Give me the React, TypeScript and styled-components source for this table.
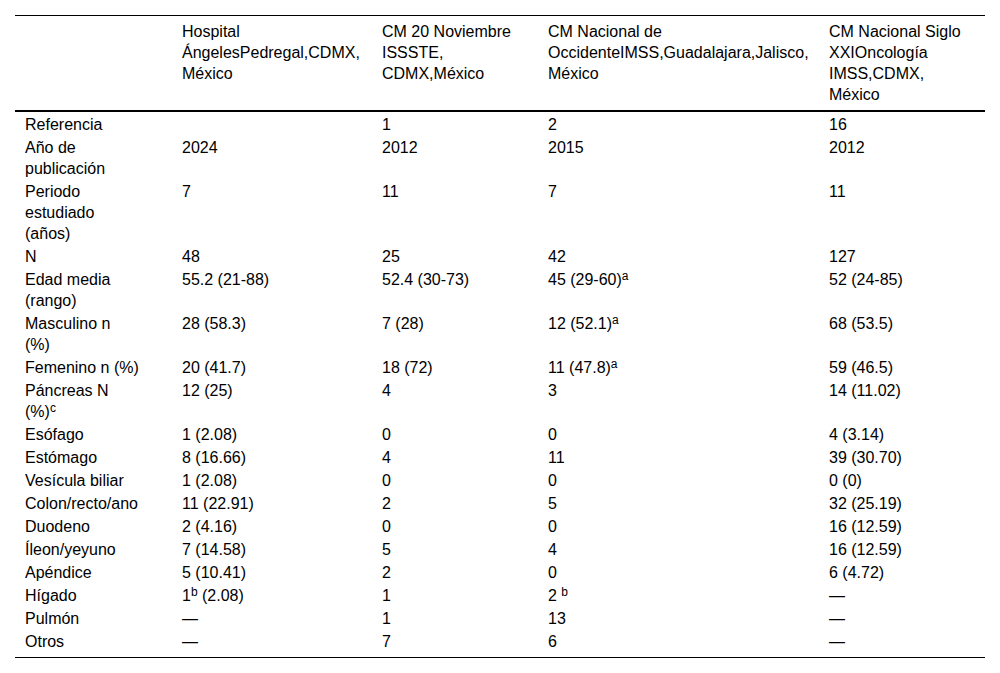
import React from "react";
import styled, { createGlobalStyle } from "styled-components";

const Global = createGlobalStyle`
  html, body { margin: 0; padding: 0; background: #fff; }
  body { font-family: "Liberation Sans", Arial, sans-serif; color: #000; }
`;

const Page = styled.div`
  padding: 15px;
`;

const Table = styled.table`
  width: 970px;
  border-collapse: collapse;
  table-layout: fixed;
  font-size: 16px;
  line-height: 21px;
  border-top: 1px solid #000;
  border-bottom: 1px solid #000;
`;

const Col = styled.col<{ $w: number }>`
  width: ${(p) => p.$w}px;
`;

const HeadCell = styled.th`
  text-align: left;
  vertical-align: top;
  font-weight: normal;
  padding: 5px 4px 5px 10px;
  white-space: nowrap;
  border-bottom: 2px solid #000;
`;

const Cell = styled.td<{ $last?: boolean }>`
  vertical-align: top;
  padding: 2px 4px ${(p) => (p.$last ? 5 : 0)}px 10px;
  white-space: nowrap;
`;

const Sup = styled.sup`
  font-size: 0.75em;
  line-height: 0;
  vertical-align: baseline;
  position: relative;
  top: -0.45em;
`;

type Content = React.ReactNode;

const lines = (parts: Content[]) =>
  parts.map((p, i) => (
    <React.Fragment key={i}>
      {i > 0 && <br />}
      {p}
    </React.Fragment>
  ));

const headers: Content[][] = [
  [""],
  ["Hospital", "ÁngelesPedregal,CDMX,", "México"],
  ["CM 20 Noviembre", "ISSSTE,", "CDMX,México"],
  ["CM Nacional de", "OccidenteIMSS,Guadalajara,Jalisco,", "México"],
  ["CM Nacional Siglo", "XXIOncología", "IMSS,CDMX,", "México"],
];

const rows: Content[][][] = [
  [["Referencia"], [""], ["1"], ["2"], ["16"]],
  [["Año de", "publicación"], ["2024"], ["2012"], ["2015"], ["2012"]],
  [["Periodo", "estudiado", "(años)"], ["7"], ["11"], ["7"], ["11"]],
  [["N"], ["48"], ["25"], ["42"], ["127"]],
  [
    ["Edad media", "(rango)"],
    ["55.2 (21-88)"],
    ["52.4 (30-73)"],
    [<>45 (29-60)<Sup>a</Sup></>],
    ["52 (24-85)"],
  ],
  [
    ["Masculino n", "(%)"],
    ["28 (58.3)"],
    ["7 (28)"],
    [<>12 (52.1)<Sup>a</Sup></>],
    ["68 (53.5)"],
  ],
  [
    ["Femenino n (%)"],
    ["20 (41.7)"],
    ["18 (72)"],
    [<>11 (47.8)<Sup>a</Sup></>],
    ["59 (46.5)"],
  ],
  [
    ["Páncreas N", <>(%)<Sup>c</Sup></>],
    ["12 (25)"],
    ["4"],
    ["3"],
    ["14 (11.02)"],
  ],
  [["Esófago"], ["1 (2.08)"], ["0"], ["0"], ["4 (3.14)"]],
  [["Estómago"], ["8 (16.66)"], ["4"], ["11"], ["39 (30.70)"]],
  [["Vesícula biliar"], ["1 (2.08)"], ["0"], ["0"], ["0 (0)"]],
  [["Colon/recto/ano"], ["11 (22.91)"], ["2"], ["5"], ["32 (25.19)"]],
  [["Duodeno"], ["2 (4.16)"], ["0"], ["0"], ["16 (12.59)"]],
  [["Íleon/yeyuno"], ["7 (14.58)"], ["5"], ["4"], ["16 (12.59)"]],
  [["Apéndice"], ["5 (10.41)"], ["2"], ["0"], ["6 (4.72)"]],
  [
    ["Hígado"],
    [<>1<Sup>b</Sup> (2.08)</>],
    ["1"],
    [<>2 <Sup>b</Sup></>],
    ["—"],
  ],
  [["Pulmón"], ["—"], ["1"], ["13"], ["—"]],
  [["Otros"], ["—"], ["7"], ["6"], ["—"]],
];

const widths = [157, 200, 166, 281, 166];

export default function App() {
  return (
    <Page>
      <Global />
      <Table>
        <colgroup>
          {widths.map((w, i) => (
            <Col key={i} $w={w} />
          ))}
        </colgroup>
        <thead>
          <tr>
            {headers.map((h, i) => (
              <HeadCell key={i}>{lines(h)}</HeadCell>
            ))}
          </tr>
        </thead>
        <tbody>
          {rows.map((r, ri) => (
            <tr key={ri}>
              {r.map((c, ci) => (
                <Cell key={ci} $last={ri === rows.length - 1}>
                  {lines(c)}
                </Cell>
              ))}
            </tr>
          ))}
        </tbody>
      </Table>
    </Page>
  );
}
